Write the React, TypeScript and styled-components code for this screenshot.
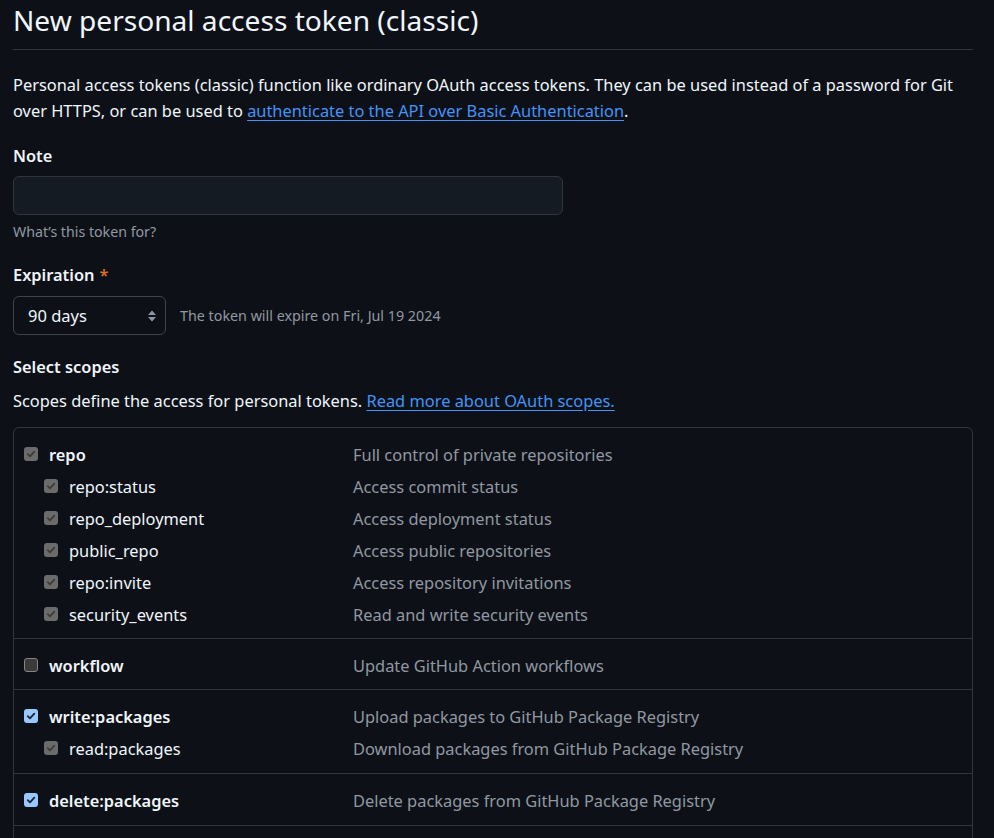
import React from "react";
import styled, { createGlobalStyle } from "styled-components";

const Global = createGlobalStyle`
  html, body { margin: 0; padding: 0; background: #0d1117; }
  body {
    font-family: "Noto Sans", "Open Sans", sans-serif;
    color: #f0f6fc;
    -webkit-font-smoothing: antialiased;
  }
  * { box-sizing: border-box; }
`;

const Page = styled.div`
  width: 960px;
  margin-left: 13px;
`;

const Title = styled.h2`
  margin: 0;
  font-size: 28.1px;
  font-weight: 400;
  line-height: 40px;
  padding-bottom: 9px;
  border-bottom: 1px solid #30363d;
  color: #f0f6fc;
`;

const Para = styled.p<{ $mt: number }>`
  margin: ${(p) => p.$mt}px 0 0;
  font-size: 16.4px;
  line-height: 26px;
  color: #f0f6fc;
`;

const Link = styled.a`
  color: #4493f8;
  text-decoration: underline;
  text-underline-offset: 3px;
`;

const Label = styled.div<{ $mt: number }>`
  margin-top: ${(p) => p.$mt}px;
  font-size: 16.4px;
  font-weight: 600;
  line-height: 24px;
`;

const Required = styled.span`
  color: #db6d28;
  margin-left: 5px;
`;

const TextInput = styled.div`
  margin-top: 8px;
  width: 550px;
  height: 39px;
  background: #151b23;
  border: 1px solid #30363d;
  border-radius: 6px;
`;

const Hint = styled.div`
  margin-top: 7px;
  font-size: 14.2px;
  line-height: 20px;
  color: #9198a1;
`;

const ExpiryRow = styled.div`
  margin-top: 9px;
  display: flex;
  align-items: center;
  gap: 14px;
`;

const SelectBox = styled.div`
  width: 153px;
  height: 39px;
  border: 1px solid #3d444d;
  border-radius: 6px;
  background: #0d1117;
  display: flex;
  align-items: center;
  justify-content: space-between;
  padding: 0 7px 0 14px;
  font-size: 16.5px;
  color: #f0f6fc;
`;

const ExpiryNote = styled.span`
  font-size: 14.3px;
  color: #9198a1;
`;

const ScopeBox = styled.div`
  margin-top: 13px;
  border: 1px solid #30363d;
  border-radius: 6px;
`;

const Group = styled.div`
  padding: 10px 0 8px;
  & + & {
    border-top: 1px solid #30363d;
  }
  &:nth-child(n + 3) {
    padding-bottom: 9px;
  }
`;

const Row = styled.div<{ $child?: boolean }>`
  height: 32px;
  display: grid;
  grid-template-columns: 329px 1fr;
  align-items: center;
  padding-left: ${(p) => (p.$child ? 30 : 10)}px;
`;

const NameCell = styled.div<{ $bold?: boolean }>`
  display: flex;
  align-items: center;
  gap: 11px;
  font-size: 16.4px;
  font-weight: ${(p) => (p.$bold ? 600 : 400)};
  color: #f0f6fc;
`;

const Desc = styled.div<{ $child?: boolean }>`
  margin-left: ${(p) => (p.$child ? -20 : 0)}px;
  font-size: 16.4px;
  color: #9198a1;
`;

type BoxKind = "disabled" | "checked" | "unchecked";

const Box = styled.span<{ $kind: BoxKind }>`
  width: 14px;
  height: 14px;
  border-radius: 3px;
  display: inline-flex;
  align-items: center;
  justify-content: center;
  flex-shrink: 0;
  background: ${(p) =>
    p.$kind === "checked" ? "#99c8ff" : p.$kind === "disabled" ? "#6b6b6b" : "#3b3b3b"};
  border: ${(p) => (p.$kind === "unchecked" ? "1px solid #858585" : "none")};
`;

const Check = ({ kind }: { kind: BoxKind }) => (
  <Box $kind={kind}>
    {kind !== "unchecked" && (
      <svg width="10" height="10" viewBox="0 0 10 10">
        <path
          d="M1.8 5.2 L4 7.4 L8.3 2.6"
          fill="none"
          stroke={kind === "checked" ? "#1b2230" : "#3c3c3c"}
          strokeWidth="1.8"
          strokeLinecap="round"
          strokeLinejoin="round"
        />
      </svg>
    )}
  </Box>
);

type Scope = { name: string; desc: string; kind: BoxKind; child?: boolean };

const groups: Scope[][] = [
  [
    { name: "repo", desc: "Full control of private repositories", kind: "disabled" },
    { name: "repo:status", desc: "Access commit status", kind: "disabled", child: true },
    { name: "repo_deployment", desc: "Access deployment status", kind: "disabled", child: true },
    { name: "public_repo", desc: "Access public repositories", kind: "disabled", child: true },
    { name: "repo:invite", desc: "Access repository invitations", kind: "disabled", child: true },
    { name: "security_events", desc: "Read and write security events", kind: "disabled", child: true },
  ],
  [{ name: "workflow", desc: "Update GitHub Action workflows", kind: "unchecked" }],
  [
    { name: "write:packages", desc: "Upload packages to GitHub Package Registry", kind: "checked" },
    { name: "read:packages", desc: "Download packages from GitHub Package Registry", kind: "disabled", child: true },
  ],
  [{ name: "delete:packages", desc: "Delete packages from GitHub Package Registry", kind: "checked" }],
  [
    { name: "admin:org", desc: "Full control of orgs and teams, read and write org projects", kind: "unchecked" },
  ],
];

const Arrows = () => (
  <svg width="12" height="16" viewBox="0 0 12 16">
    <path d="M6 2.5 L10 7 L2 7 Z" fill="#8d96a0" />
    <path d="M6 13.5 L10 9 L2 9 Z" fill="#8d96a0" />
  </svg>
);

export default function App() {
  return (
    <>
      <Global />
      <Page>
        <Title>New personal access token (classic)</Title>
        <Para $mt={22}>
          Personal access tokens (classic) function like ordinary OAuth access tokens. They can be used instead of a
          password for Git over HTTPS, or can be used to{" "}
          <Link href="#">authenticate to the API over Basic Authentication</Link>.
        </Para>
        <Label $mt={20}>Note</Label>
        <TextInput />
        <Hint>What’s this token for?</Hint>
        <Label $mt={21}>
          Expiration<Required>*</Required>
        </Label>
        <ExpiryRow>
          <SelectBox>
            <span>90 days</span>
            <Arrows />
          </SelectBox>
          <ExpiryNote>The token will expire on Fri, Jul 19 2024</ExpiryNote>
        </ExpiryRow>
        <Label $mt={20}>Select scopes</Label>
        <Para $mt={9}>
          Scopes define the access for personal tokens. <Link href="#">Read more about OAuth scopes.</Link>
        </Para>
        <ScopeBox>
          {groups.map((g, gi) => (
            <Group key={gi}>
              {g.map((s) => (
                <Row key={s.name} $child={s.child}>
                  <NameCell $bold={!s.child}>
                    <Check kind={s.kind} />
                    {s.name}
                  </NameCell>
                  <Desc $child={s.child}>{s.desc}</Desc>
                </Row>
              ))}
            </Group>
          ))}
        </ScopeBox>
      </Page>
    </>
  );
}
